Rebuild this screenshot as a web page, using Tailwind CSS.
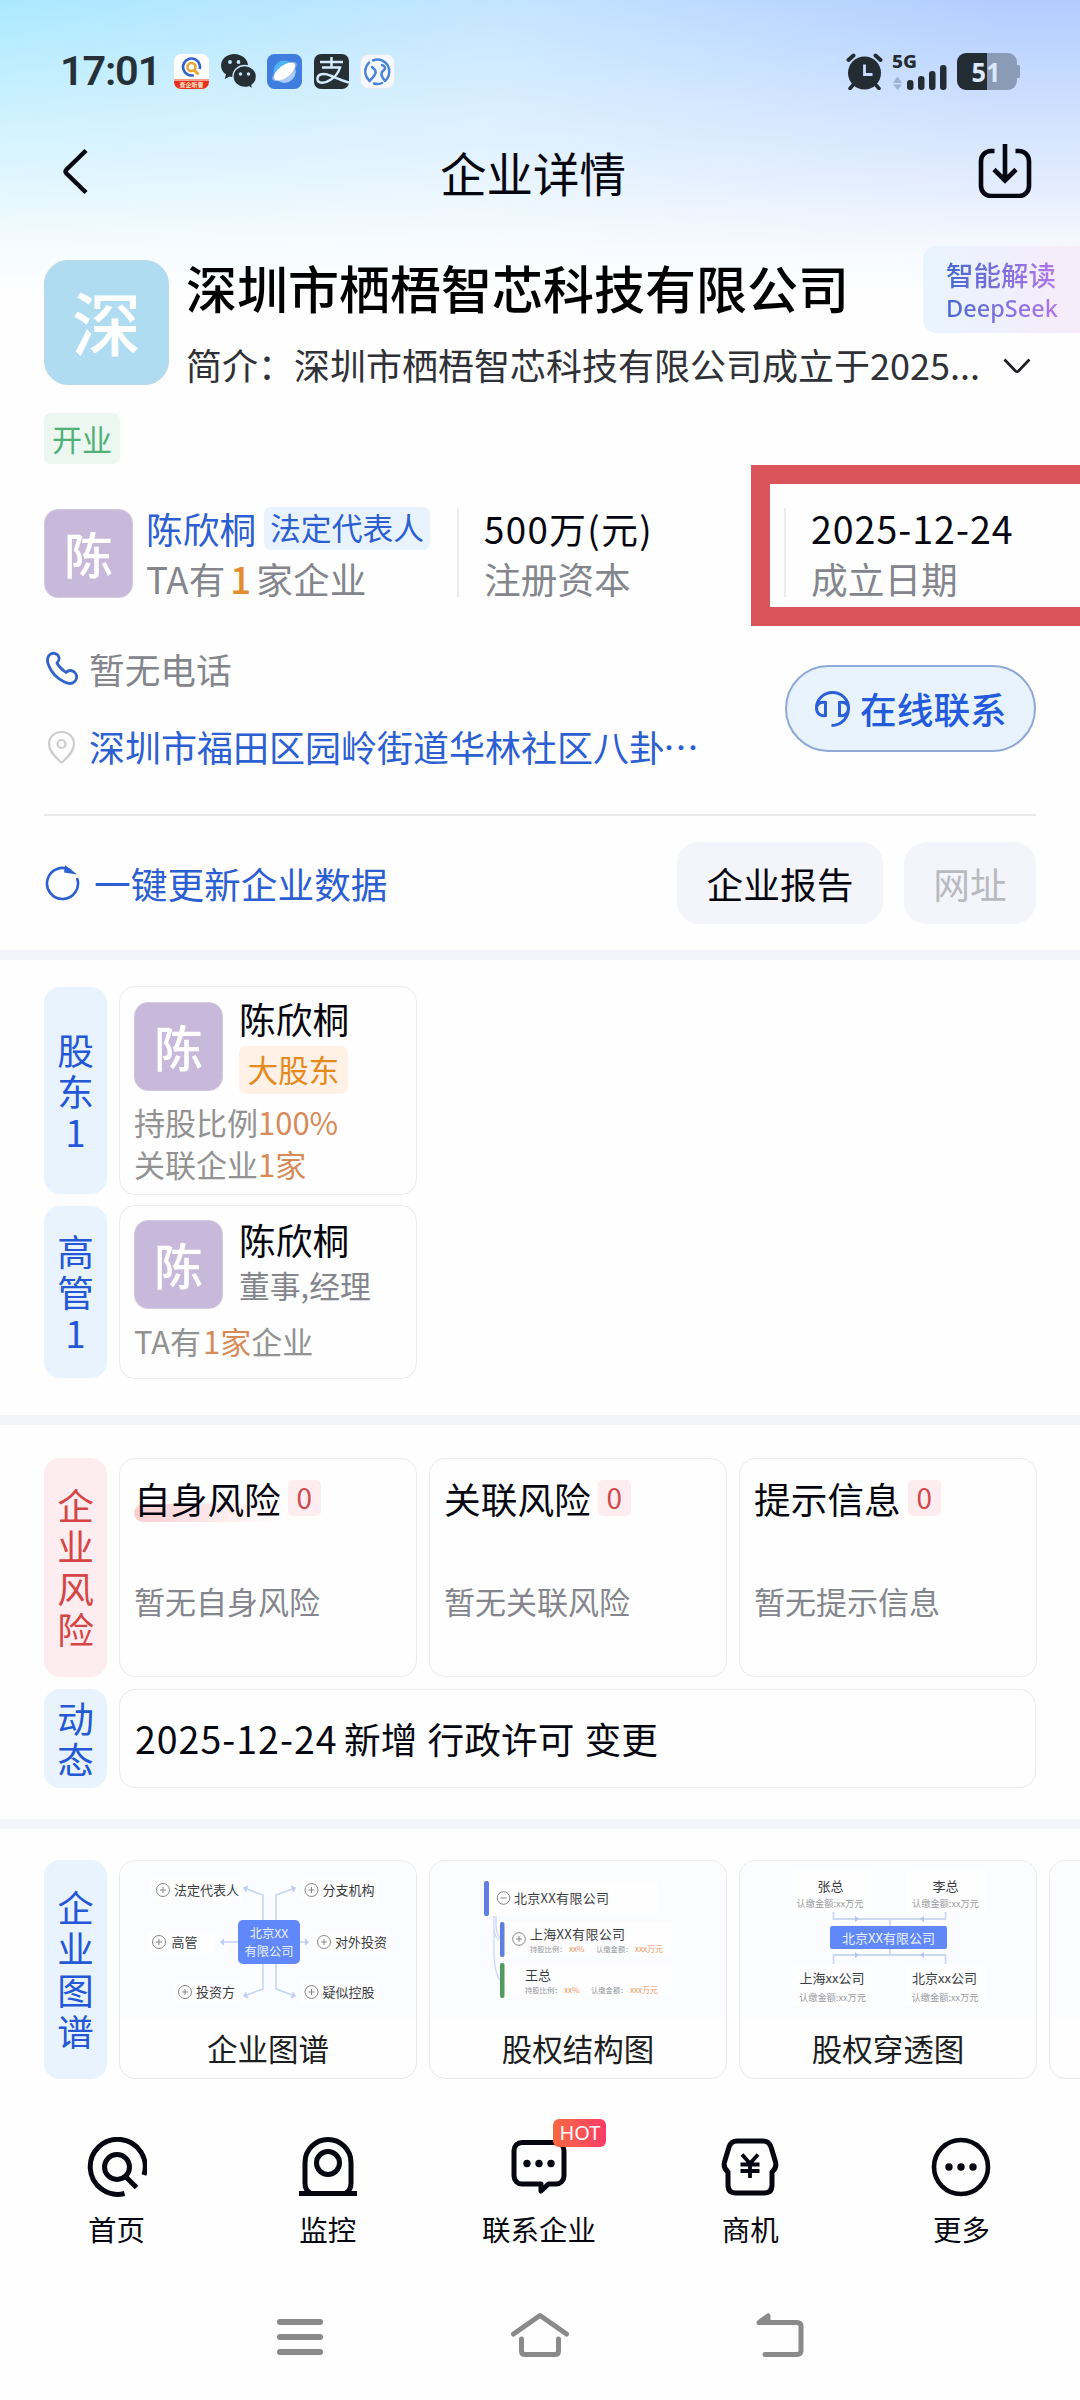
<!DOCTYPE html>
<html lang="zh-CN">
<head>
<meta charset="utf-8">
<title>企业详情</title>
<script src="https://cdn.jsdelivr.net/npm/@tailwindcss/browser@4"></script>
</head>
<body class="bg-[#fefefe]">
<div class="relative flex h-[2400px] w-[1080px] flex-col overflow-hidden bg-[#fefefe] font-['Noto_Sans_CJK_SC',sans-serif] text-[36.7px] leading-[50px] whitespace-nowrap text-[#05060f]">

  <div class="bg-[linear-gradient(180deg,rgba(254,254,254,0)_0%,rgba(254,254,254,0.34)_32%,rgba(254,254,254,0.62)_60%,rgba(254,254,254,0.87)_82%,#fefefe_100%),linear-gradient(97deg,#abe9ff_0%,#c3e5ff_45%,#b1cdff_90%)]">
    <!-- status bar -->
    <div class="flex h-[108px] items-center justify-between pt-[34px] pr-[60px] pl-[60px] text-[#263038]">
      <div class="flex items-center">
        <span class="w-[114px] font-[Roboto,sans-serif] text-[41.5px] font-semibold tracking-[-1.2px]">17:01</span>
        <div class="flex gap-[11.5px]">
          <svg class="size-[35px]" viewBox="0 0 35 35"><rect width="35" height="35" rx="7" fill="#fff"/><path d="M0 26h35v2a7 7 0 0 1-7 7H7a7 7 0 0 1-7-7z" fill="#e8311f"/><path d="M0 25h35v2H0z" fill="#f4a08c"/><circle cx="17.500" cy="13" r="8.500" fill="none" stroke="#2d63cf" stroke-width="2.600" stroke-dasharray="44 9" transform="rotate(75 17.500 13)"/><circle cx="17.500" cy="13" r="4" fill="none" stroke="#eaa431" stroke-width="2.600"/><path d="M20 16l4.500 4.500" stroke="#eaa431" stroke-width="2.800"/><text x="17.500" y="33" font-size="6" font-weight="700" fill="#ffe9c8" text-anchor="middle">查企听曹</text></svg>
          <svg class="size-[35px]" viewBox="0 0 35 35" fill="#263034"><path d="M13.200 0C6 0 0 5 0 11.500c0 3.700 2 7 5 9.100L3.700 25l5-2.600c1.500.4 3 .6 4.500.6C20.500 23 27 18 27 11.500S20.500 0 13.200 0z"/><circle cx="9" cy="8" r="1.900" fill="#c6e9ff"/><circle cx="17.500" cy="8" r="1.900" fill="#c6e9ff"/><path d="M23.500 11.500c-6.300 0-11.500 4.900-11.500 11s5.200 11 11.500 11c1.500 0 3-.2 4.300-.7l4 2.200-.9-3.700c2.700-2 4.600-5 4.600-8.800 0-6.100-5.700-11-12-11z" stroke="#c6e9ff" stroke-width="1.400"/><circle cx="19.500" cy="20" r="1.700" fill="#c6e9ff"/><circle cx="27.500" cy="20" r="1.700" fill="#c6e9ff"/></svg>
          <svg class="size-[35px]" viewBox="0 0 35 35"><rect width="35" height="35" rx="7.500" fill="#3f7ede"/><circle cx="17.500" cy="17.500" r="11" fill="#4fb4f6"/><path d="M8 23a11 11 0 0 0 20-9z" fill="#a9c9f6"/><ellipse cx="17.500" cy="17.500" rx="14.500" ry="5.500" transform="rotate(-35 17.500 17.500)" fill="#8db4ee"/><ellipse cx="17.500" cy="17.500" rx="12.500" ry="6" transform="rotate(-38 17.500 17.500)" fill="#fff"/></svg>
          <svg class="size-[35px]" viewBox="0 0 35 35"><rect width="35" height="35" rx="7" fill="#263034"/><path d="M6 8h23M17.500 3v10M8 13.500h18c-1.500 5-4.500 9-9 12-5 3.500-13 5-13.500 0C3 20 10 18.500 16 21.500c6 2.500 11 5 19 7" fill="none" stroke="#d4ebff" stroke-width="2.500"/></svg>
          <svg class="size-[35px]" viewBox="0 0 35 35" fill="none" stroke="#4a84d8" stroke-width="2.500" stroke-linecap="round"><rect x=".5" y=".5" width="34" height="34" rx="7.500" fill="#f5f8fd" stroke="#e3e9f1" stroke-width="1"/><path d="M13 6.500a12 12 0 0 1 16 8c1 6-1 10-4 12.500M25 27c-4-5-5-8-1-11 2-2 1-4-2-5M9 8.500c-4.500 5-5.500 12 .5 18.500 4-4 7-7 6-10-.7-2-2.500-2.500-3.500-4M14 29.500c4 1 6 .5 8-.5"/></svg>
        </div>
      </div>
      <div class="flex items-center gap-[10px]">
        <svg class="h-[37px] w-[37px]" viewBox="0 0 37 37" fill="#242c33" stroke="#242c33" stroke-linecap="round"><circle cx="18.500" cy="20" r="16.500" stroke="none"/><path d="M2.500 7l5-4.500M34.500 7l-5-4.500" stroke-width="4"/><path d="M7 32l-3 3.500M30 32l3 3.500" stroke-width="3.500"/><path d="M18.500 11.500v10h8" fill="none" stroke="#c7dcff" stroke-width="2.800" stroke-linecap="butt"/></svg>
        <svg class="h-[37px] w-[54px] overflow-visible" viewBox="0 0 54 37" fill="#242c33"><text x="-1" y="14.500" font-family="Noto Sans" font-size="18.500" font-weight="800" textLength="25" lengthAdjust="spacingAndGlyphs">5G</text><path d="M0 30l4.500-6.500L9 30zM0 31.500h9L4.500 37z" fill="#9fb1d4"/><rect x="14" y="27" width="6.500" height="10" rx="3"/><rect x="25" y="23" width="6.500" height="14" rx="3"/><rect x="36" y="18" width="6.500" height="19" rx="3"/><rect x="47" y="12" width="6.500" height="25" rx="3"/></svg>
        <svg class="h-[37px] w-[63px]" viewBox="0 0 63 37"><path d="M30 0h21a9 9 0 0 1 9 9v3h1.500a1.500 1.500 0 0 1 1.500 1.500v10a1.500 1.500 0 0 1-1.500 1.500H60v3a9 9 0 0 1-9 9H30z" fill="#8a9bb7"/><path d="M30 0H9a9 9 0 0 0-9 9v19a9 9 0 0 0 9 9h21z" fill="#242c33"/><text x="29" y="28.500" text-anchor="middle" font-family="Noto Sans" font-size="27" font-weight="700" textLength="29" lengthAdjust="spacingAndGlyphs" fill="#dbe8ff">51</text></svg>
      </div>
    </div>
    <!-- title bar -->
    <div class="flex h-[126px] items-center justify-between pr-[48px] pl-[62px]">
      <svg class="h-[47px] w-[26px]" viewBox="0 0 26 47" fill="none" stroke="#05060f" stroke-width="4.500" stroke-linejoin="round"><path d="M24 2.500L4.500 21.500q-2 2 0 4L24 44.500"/></svg>
      <h1 class="pt-[2px] text-[46.5px]">企业详情</h1>
      <svg class="size-[54px]" viewBox="0 0 54 54" fill="none" stroke="#05060f" stroke-width="4.600"><path d="M16.500 7H13A10 10 0 0 0 3 17v25a10 10 0 0 0 10 10h28a10 10 0 0 0 10-10V17A10 10 0 0 0 41 7h-3.500M27 0v37M16 25.500L27 36.500l11-11"/></svg>
    </div>
    <div class="h-[60px]"></div>
  </div>

  <!-- company -->
  <section class="relative -mt-[60px] flex h-[716px] shrink-0 flex-col">
    <div class="absolute top-[12px] right-0 flex h-[87px] w-[157px] flex-col justify-center rounded-l-[14px] bg-linear-to-r from-[#e8f4ff] to-[#f7ebf9] pl-[23px]">
      <div class="w-[112px] bg-linear-to-r from-[#4468d2] to-[#b276ea] bg-clip-text text-transparent">
        <div class="pt-[2px] text-[27.5px] leading-[35px] font-medium">智能解读</div>
        <div class="font-['Noto_Sans',sans-serif] text-[23.5px] leading-[32px] font-medium">DeepSeek</div>
      </div>
    </div>
    <div class="flex pt-[26px] pl-[44px]">
      <div class="flex size-[125px] items-center justify-center rounded-[24px] border border-[#bcd8e6] bg-[#b0dcf2] pb-[3px] text-[69px] font-medium text-white">深</div>
      <div class="pl-[17px]">
        <h2 class="h-[54px] text-[51px] leading-[54px] font-medium text-black">深圳市栖梧智芯科技有限公司</h2>
        <div class="flex items-center pt-[25px] text-[36px] text-[#303136]"><span class="w-[817px]">简介：深圳市栖梧智芯科技有限公司成立于2025...</span>
          <svg class="mt-[4px] h-[16px] w-[28px]" viewBox="0 0 28 16" fill="none" stroke="#1c1d22" stroke-width="2.600"><path d="M1.500 1.500L12.500 13q1.500 1.300 3 0L26.500 1.500"/></svg></div>
      </div>
    </div>
    <div class="mt-[24px] ml-[44px] flex h-[51px] w-[76px] items-center justify-center rounded-[7px] bg-[#ebf7f0] pb-[2px] text-[30px] text-[#51b077]">开业</div>
    <div class="mt-[38px] flex h-[100px] pl-[44px]">
      <div class="mt-[7px] flex size-[89px] items-center justify-center rounded-[14px] border border-[#d5cbe0] bg-[#c8b8da] pb-[2px] text-[49px] font-medium text-white">陈</div>
      <div class="w-[324px] pt-px pl-[13px]">
        <div class="flex items-center text-[#2c5fd2]">陈欣桐<span class="ml-[8px] flex h-[43px] items-center rounded-[7px] bg-[#e8f3fe] px-[6px] pb-[2px] text-[30.8px]">法定代表人</span></div>
        <div class="text-[#85868d]">TA有<span class="px-[5px] font-medium text-[#e58d2c]">1</span>家企业</div>
      </div>
      <div class="mt-[6px] h-[89px] w-[2px] bg-[#ebebee]"></div>
      <div class="w-[325px] pt-px pl-[25px]"><div class="tracking-[1.4px]">500万(元)</div><div class="text-[#85868d]">注册资本</div></div>
      <div class="mt-[6px] h-[89px] w-[2px] bg-[#ebebee]"></div>
      <div class="pt-px pl-[25px]"><div class="text-[37.5px] tracking-[1px]">2025-12-24</div><div class="text-[#85868d]">成立日期</div></div>
    </div>
    <div class="flex h-[212px] pt-[41px] pl-[44px]">
      <div class="w-[741px] text-[36px]">
        <div class="flex h-[50px] items-center text-[#85868d]">
          <svg class="mr-[10px] ml-px h-[34px] w-[34px]" viewBox="0 0 34 34" fill="none" stroke="#3563cc" stroke-width="2.800" stroke-linejoin="round"><path d="M5 3.500C8 1 13 2.500 14 6.500c.5 2.500-.5 4-2 5.500 2 4 5 6.500 9 9.500 2-2 5-2.500 7.500-1 3.500 2 4 6 2 9-2.500 3.500-7 3.500-11 1.500C11.500 27 6 21 3.500 14 1.800 9.500 2.200 5.800 5 3.500z"/></svg><span class="pt-px text-[35.700px]">暂无电话</span></div>
        <div class="mt-[28px] flex h-[50px] items-center text-[#2c5fd2]">
          <svg class="mt-[2px] mr-[11px] h-[34px] w-[34px]" viewBox="0 0 34 34" fill="none" stroke="#cdcdcf" stroke-width="2.200"><path d="M17.500 2C10 2 5 7.500 5 14c0 8 7 13 11 17.500q1.500 1.500 3 0C23 27 30 22 30 14 30 7.500 25 2 17.500 2z"/><circle cx="17.500" cy="14" r="4"/></svg><span class="w-[574px] overflow-hidden">深圳市福田区园岭街道华林社区八卦</span><span>⋯</span></div>
      </div>
      <div class="mt-[22px] flex h-[87px] w-[251px] items-center rounded-full border-2 border-[#8fa8d6] bg-[#e8f3fe] pl-[27px] font-medium text-[#235bdc]">
        <svg class="mr-[9px] size-[37px]" viewBox="0 0 37 37" fill="none" stroke="#2c60d6" stroke-width="3"><path d="M2.500 18A16 15.500 0 0 1 34.500 18c0 9-6 17-17 17.500M11.500 12.500v13c-5 1-9-2-9-7.500 0-4 4-6.500 9-5.500zM25.500 12.500v13c5 1 9-2 9-7.500 0-4-4-6.500-9-5.500z"/></svg><span class="pb-[2px]">在线联系</span></div>
    </div>
    <div class="mx-[44px] h-[2px] bg-[#eaeaec]"></div>
    <div class="flex items-center pt-[26px] pr-[44px] pl-[44px]">
      <svg class="size-[36px]" viewBox="0 0 36 36" fill="none" stroke="#2c5fd2" stroke-width="2.600"><path d="M27 5.500A15.500 15.500 0 1 0 33 13"/><path d="M22 2.500l6.500 5-7-1z" fill="#2c5fd2"/></svg>
      <span class="flex-1 pl-[14px] text-[#2c5fd2]">一键更新企业数据</span>
      <span class="flex h-[82px] w-[206px] items-center justify-center rounded-[22px] bg-[#f4f5fa]">企业报告</span>
      <span class="ml-[21px] flex h-[82px] w-[132px] items-center justify-center rounded-[22px] bg-[#f4f5fa] text-[#b9babf]">网址</span>
    </div>
    <!-- highlighted founding date -->
    <div class="absolute top-[231px] left-[751px] h-[161px] w-[360px] border-[19px] border-[#da555a]"></div>
  </section>
  <div class="h-[10px] shrink-0 bg-[#f4f5fa]"></div>

  <!-- people -->
  <section class="flex h-[455px] shrink-0 flex-col gap-[10px] pt-[26px] pl-[44px]">
    <div class="flex h-[209px] gap-[12px]">
      <div class="my-px flex w-[63px] flex-col items-center justify-center rounded-[16px] bg-[#e8f3fe] leading-[41px] text-[#2458d6]"><span>股</span><span>东</span><span>1</span></div>
      <div class="w-[298px] rounded-[16px] border border-[#ebebee] pl-[14px] text-[31px]">
        <div class="flex h-[111px] pt-[15px]">
          <div class="flex size-[89px] items-center justify-center rounded-[14px] border border-[#d5cbe0] bg-[#c8b8da] pb-[2px] text-[49px] font-medium text-white">陈</div>
          <div class="pl-[16px]"><div class="-mt-[9px] text-[36.7px]">陈欣桐</div><div class="mt-[3px] flex h-[48px] w-[109px] items-center justify-center rounded-[7px] bg-[#fff1e5] pb-[2px] text-[30.5px] text-[#e58a1d]">大股东</div></div>
        </div>
        <div class="pt-[3px] leading-[42px] text-[#929292]"><div>持股比例<span class="text-[#d78b5a]">100%</span></div><div>关联企业<span class="text-[#d78b5a]">1家</span></div></div>
      </div>
    </div>
    <div class="flex h-[174px] gap-[12px]">
      <div class="my-px flex w-[63px] flex-col items-center justify-center rounded-[16px] bg-[#e8f3fe] pb-[2px] leading-[41px] text-[#2458d6]"><span>高</span><span>管</span><span>1</span></div>
      <div class="w-[298px] rounded-[16px] border border-[#ebebee] pl-[14px] text-[31px]">
        <div class="flex h-[111px] pt-[14px]">
          <div class="flex size-[89px] items-center justify-center rounded-[14px] border border-[#d5cbe0] bg-[#c8b8da] pb-[2px] text-[49px] font-medium text-white">陈</div>
          <div class="pl-[16px]"><div class="-mt-[6px] text-[36.7px]">陈欣桐</div><div class="-mt-[4px] text-[30.8px] text-[#85868d]">董事,经理</div></div>
        </div>
        <div class="pt-px leading-[46px] text-[#929292]">TA有<span class="pl-[2px] text-[#d78b5a]">1家</span>企业</div>
      </div>
    </div>
  </section>
  <div class="h-[10px] shrink-0 bg-[#f4f5fa]"></div>

  <!-- risk and news -->
  <section class="flex h-[394px] shrink-0 flex-col gap-[12px] pt-[33px] pl-[44px]">
    <div class="flex h-[219px] gap-[12px]">
      <div class="flex w-[63px] flex-col items-center justify-center rounded-[16px] bg-[#feedf0] pb-[2px] leading-[41.5px] text-[#d64545]"><span>企</span><span>业</span><span>风</span><span>险</span></div>
      <div class="w-[298px] rounded-[16px] border border-[#ebebee] px-[14px] pt-[14px]">
        <div class="relative flex items-center"><span class="absolute top-[31px] left-0 h-[18px] w-[146px] rounded-full bg-linear-to-r from-[#fbcfd2] to-transparent"></span><span class="relative">自身风险</span><span class="ml-[7px] flex h-[36px] w-[33px] items-center justify-center rounded-[5px] bg-[#feedf0] pb-[3px] text-[28px] text-[#cf4a4d]">0</span></div>
        <div class="pt-[53px] text-[31px] text-[#85868d]">暂无自身风险</div>
      </div>
      <div class="w-[298px] rounded-[16px] border border-[#ebebee] px-[14px] pt-[14px]">
        <div class="flex items-center">关联风险<span class="ml-[7px] flex h-[36px] w-[33px] items-center justify-center rounded-[5px] bg-[#feedf0] pb-[3px] text-[28px] text-[#cf4a4d]">0</span></div>
        <div class="pt-[53px] text-[31px] text-[#85868d]">暂无关联风险</div>
      </div>
      <div class="w-[298px] rounded-[16px] border border-[#ebebee] px-[14px] pt-[14px]">
        <div class="flex items-center">提示信息<span class="ml-[7px] flex h-[36px] w-[33px] items-center justify-center rounded-[5px] bg-[#feedf0] pb-[3px] text-[28px] text-[#cf4a4d]">0</span></div>
        <div class="pt-[53px] text-[31px] text-[#85868d]">暂无提示信息</div>
      </div>
    </div>
    <div class="flex h-[99px] gap-[12px]">
      <div class="flex w-[63px] flex-col items-center justify-center rounded-[16px] bg-[#e8f3fe] pb-[2px] leading-[41px] text-[#2458d6]"><span>动</span><span>态</span></div>
      <div class="flex w-[917px] items-center rounded-[16px] border border-[#ebebee] pb-[2px] pl-[15px]"><span class="w-[209px] text-[37.5px] tracking-[1px]">2025-12-24</span><span class="[word-spacing:2px]">新增 行政许可 变更</span></div>
    </div>
  </section>
  <div class="h-[10px] shrink-0 bg-[#f4f5fa]"></div>

  <!-- charts -->
  <section class="flex h-[262px] shrink-0 gap-[12px] overflow-hidden pt-[31px] pl-[44px] text-[30.5px] text-[#1c1d20]">
    <div class="flex h-[219px] w-[63px] shrink-0 flex-col items-center justify-center rounded-[16px] bg-[#e8f3fe] pb-[2px] text-[36.5px] leading-[41.5px] text-[#2458d6]"><span>企</span><span>业</span><span>图</span><span>谱</span></div>
    <div class="h-[219px] w-[298px] shrink-0 overflow-hidden rounded-[16px] border border-[#e9e9ee] text-center">
      <svg class="h-[156px] w-[296px] bg-[#fafcff]" viewBox="120 1861 296 156" font-size="13" fill="#3a3c42">
        <g fill="#fefefe"><rect x="151" y="1879" width="91" height="22"/><rect x="301" y="1879" width="77" height="22"/><rect x="148" y="1931" width="67" height="22"/><rect x="313" y="1931" width="77" height="22"/><rect x="174" y="1981" width="64" height="22"/><rect x="301" y="1981" width="77" height="22"/></g>
        <g fill="none" stroke="#c5d3f6" stroke-width="1.500"><path d="M263 1920v-25l-19-7M276 1920v-25l19-7M238 1942h-17M300 1942h8M263 1964v25l-19 7M276 1964v25l19 7"/><path d="M248 1886l-4 2 2 4M291 1886l4 2-2 4M224 1939l-3 3 3 3M305 1939l3 3-3 3M246 1992l-2 4 4 2M293 1992l2 4-4 2" fill="#b9caf5"/></g>
        <g fill="none" stroke="#85868d" stroke-width="1"><circle cx="163" cy="1890" r="6.500"/><circle cx="311.500" cy="1890" r="6.500"/><circle cx="159" cy="1942" r="6.500"/><circle cx="324" cy="1942" r="6.500"/><circle cx="185" cy="1992" r="6.500"/><circle cx="311.500" cy="1992" r="6.500"/><path d="M160 1890h6m-3-3v6M308.500 1890h6m-3-3v6M156 1942h6m-3-3v6M321 1942h6m-3-3v6M182 1992h6m-3-3v6M308.500 1992h6m-3-3v6"/></g>
        <rect x="238" y="1920" width="62" height="44" rx="5" fill="#6088fa"/>
        <text x="174" y="1895">法定代表人</text><text x="322.500" y="1895">分支机构</text><text x="171.500" y="1947">高管</text><text x="335" y="1947">对外投资</text><text x="196" y="1997">投资方</text><text x="322.500" y="1997">疑似控股</text>
        <g fill="#e9f0ff" text-anchor="middle" font-size="12.300"><text x="269" y="1938">北京XX</text><text x="269" y="1956">有限公司</text></g>
      </svg>
      <div class="pt-[6px]">企业图谱</div>
    </div>
    <div class="h-[219px] w-[298px] shrink-0 overflow-hidden rounded-[16px] border border-[#e9e9ee] text-center">
      <svg class="h-[156px] w-[296px] bg-[#fafcff]" viewBox="430 1861 296 156" font-size="13" fill="#3a3c42">
        <g fill="#fefefe"><rect x="484" y="1881" width="173" height="34"/><rect x="500" y="1922" width="172" height="34"/><rect x="500" y="1963" width="172" height="34"/></g>
        <path d="M494 1916v12q1 10 5 12M496 1916v10q1 10 4 12M494 1926v30q1 18 6 24" fill="none" stroke="#cbd8f7" stroke-width="1.300"/>
        <rect x="484" y="1881" width="5" height="35" rx="2" fill="#5f80e2"/><rect x="500" y="1922" width="4.500" height="35" rx="2" fill="#5f80e2"/><rect x="500" y="1963" width="4.500" height="35" rx="2" fill="#529b5e"/>
        <g fill="none" stroke="#85868d"><circle cx="503.500" cy="1898" r="6.300"/><circle cx="519" cy="1939" r="6.300"/><path d="M500.500 1898h6M516 1939h6m-3-3v6"/></g>
        <text x="514" y="1903" textLength="95">北京XX有限公司</text><text x="530" y="1939" textLength="95">上海XX有限公司</text><text x="525" y="1979.500">王总</text>
        <g font-size="7.300" fill="#93949b"><text x="530" y="1951.500">持股比例：</text><text x="596" y="1951.500">认缴金额：</text><text x="525" y="1992.500">持股比例：</text><text x="591" y="1992.500">认缴金额：</text></g>
        <g font-size="8" fill="#ef955f"><text x="569" y="1952">xx%</text><text x="635" y="1952">xxx万元</text><text x="564" y="1993">xx%</text><text x="630" y="1993">xxx万元</text></g>
      </svg>
      <div class="pt-[6px]">股权结构图</div>
    </div>
    <div class="h-[219px] w-[298px] shrink-0 overflow-hidden rounded-[16px] border border-[#e9e9ee] text-center">
      <svg class="h-[156px] w-[296px] bg-[#fafcff]" viewBox="740 1861 296 156" font-size="13" fill="#3a3c42" text-anchor="middle">
        <g fill="#fefefe"><rect x="792" y="1871" width="80" height="41"/><rect x="905" y="1871" width="80" height="41"/><rect x="792" y="1965" width="80" height="41"/><rect x="905" y="1965" width="80" height="41"/></g>
        <path d="M833.500 1912v7h112v-7M890 1919v7M833.500 1964v-9h112v9M890 1949v6" fill="none" stroke="#cdd8f5" stroke-width="1.800"/>
        <path d="M855 1916v6l4-3zM924 1916v6l-4-3zM855 1952v6l4-3zM924 1952v6l-4-3z" fill="#b3c4ef"/>
        <rect x="830" y="1926" width="117" height="23" rx="2" fill="#6088fa"/>
        <text x="888.500" y="1942.500" fill="#e9f0ff">北京XX有限公司</text>
        <text x="830.500" y="1891">张总</text><text x="945.500" y="1891">李总</text><text x="832" y="1983">上海xx公司</text><text x="944.500" y="1983">北京xx公司</text>
        <g font-size="9.200" fill="#9a9ba1"><text x="830" y="1907">认缴金额:xx万元</text><text x="945.500" y="1907">认缴金额:xx万元</text><text x="832.500" y="2000.500">认缴金额:xx万元</text><text x="945" y="2000.500">认缴金额:xx万元</text></g>
      </svg>
      <div class="pt-[6px]">股权穿透图</div>
    </div>
    <div class="h-[219px] w-[298px] shrink-0 overflow-hidden rounded-[16px] border border-[#e9e9ee]"><div class="h-[156px] bg-[#fafcff]"></div></div>
  </section>

  <!-- tab bar -->
  <nav class="grid h-[190px] shrink-0 grid-cols-5 pr-[13px] pl-[11px] pt-[46px] text-center text-[28.5px] leading-[40px]">
    <div class="flex flex-col items-center gap-[12px]"><svg class="size-[60px]" viewBox="0 0 60 60" fill="none" stroke="#05060f" stroke-width="5"><path d="M57 38A27.500 27.500 0 1 0 37.500 56.500"/><circle cx="30" cy="30" r="12.500"/><path d="M38.500 39.500l11 11"/></svg>首页</div>
    <div class="flex flex-col items-center gap-[12px]"><svg class="size-[60px]" viewBox="0 0 60 60" fill="none" stroke="#05060f" stroke-width="5"><path d="M1 56.500h58M12 56q-5-3-5-10V25.500a23 23 0 0 1 46 0V46q0 7-5 10"/><circle cx="30" cy="26" r="11.500"/></svg>监控</div>
    <div class="relative flex flex-col items-center gap-[12px]"><svg class="size-[60px]" viewBox="0 0 60 60" fill="none" stroke="#05060f" stroke-width="5" stroke-linejoin="round"><path d="M13 5.500h34a8 8 0 0 1 8 8V39a8 8 0 0 1-8 8h-7.500L32 54v-7H13a8 8 0 0 1-8-8V13.500a8 8 0 0 1 8-8z"/><g fill="#05060f" stroke="none"><circle cx="18" cy="26.500" r="3.700"/><circle cx="30" cy="26.500" r="3.700"/><circle cx="42" cy="26.500" r="3.700"/></g></svg>联系企业
      <span class="absolute -top-[18px] left-[120px] h-[28px] w-[53px] rounded-[6px] bg-linear-to-r from-[#f8673f] to-[#fb3b66] font-['Noto_Sans',sans-serif] text-[20px] leading-[27px] text-white">HOT</span></div>
    <div class="flex flex-col items-center gap-[12px]"><svg class="size-[60px]" viewBox="0 0 60 60" fill="none" stroke="#05060f" stroke-width="5" stroke-linejoin="round"><path d="M17 4h26q6 0 8 6l4.500 15q1.500 6-3.500 10v13q0 8-8 8H16q-8 0-8-8V35q-5-4-3.500-10L9 10q2-6 8-6z"/><path d="M22 17.500l8 9 8-9M30 26v15M20.500 27.500h19M20.500 34h19" stroke-width="3.800"/></svg>商机</div>
    <div class="flex flex-col items-center gap-[12px]"><svg class="size-[60px]" viewBox="0 0 60 60" fill="none" stroke="#05060f" stroke-width="4.600"><circle cx="30" cy="30" r="27"/><g fill="#05060f" stroke="none"><circle cx="18" cy="30" r="3.700"/><circle cx="30" cy="30" r="3.700"/><circle cx="42" cy="30" r="3.700"/></g></svg>更多</div>
  </nav>

  <!-- system navigation -->
  <div class="flex h-[88px] shrink-0 items-start justify-between pt-[31px] pr-[270px] pl-[270px]">
    <svg class="h-[46px] w-[60px]" viewBox="0 0 60 46" stroke="#8a8a8a" stroke-width="6" stroke-linecap="round"><path d="M10 10h40M10 25h40M10 40h40"/></svg>
    <svg class="h-[46px] w-[60px]" viewBox="0 0 60 46" fill="none" stroke="#8a8a8a" stroke-width="5" stroke-linecap="round" stroke-linejoin="round"><path d="M3.500 22L30 3.500 56.500 22M11.500 27v12q0 3.500 3.500 3.500h30q3.500 0 3.500-3.500V27"/></svg>
    <svg class="h-[46px] w-[60px]" viewBox="0 0 60 46" fill="none" stroke="#8a8a8a" stroke-width="5" stroke-linecap="round" stroke-linejoin="round"><path d="M15 42.500h32q4 0 4-4V14.500q0-4-4-4H9l9-6.500v6"/></svg>
  </div>
</div>
</body>
</html>
